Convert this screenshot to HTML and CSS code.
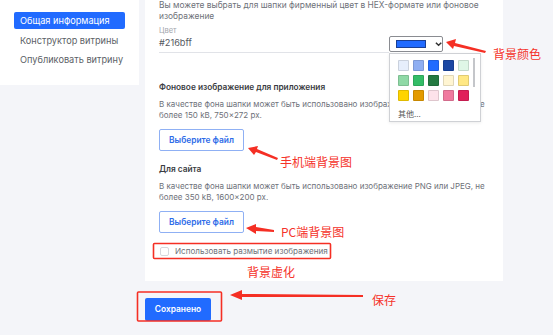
FILE: index.html
```html
<!DOCTYPE html>
<html>
<head>
  <meta charset="utf-8">
  <title>Настройки витрины</title>
  <link rel="stylesheet" href="styles.css">
</head>
<body>
  <div class="page">
    <aside class="side">
      <div class="side-item active">Общая информация</div>
      <div class="side-item">Конструктор витрины</div>
      <div class="side-item">Опубликовать витрину</div>
    </aside>

    <div class="main">
      <section class="card">
        <p class="desc intro">Вы можете выбрать для шапки фирменный цвет в HEX-формате или фоновое изображение</p>

        <div class="field">
          <div class="field-input">
            <div class="field-label">Цвет</div>
            <div class="field-value">#216bff</div>
          </div>
          <div class="picker">
            <div class="picker-select">
              <span class="picker-current"></span>
              <svg class="picker-chevron" width="8" height="6" viewBox="0 0 8 6"><path d="M1 1.5 L4 4.5 L7 1.5" fill="none" stroke="#333" stroke-width="1.6"/></svg>
            </div>
            <div class="picker-menu">
              <div class="swatches">
                <span class="swatch" style="background:#e6eefc"></span>
                <span class="swatch" style="background:#8eaef2"></span>
                <span class="swatch" style="background:#216bff"></span>
                <span class="swatch" style="background:#1b47a3"></span>
                <span class="swatch" style="background:#dff7e7"></span>
                <span class="swatch" style="background:#8fd9a6"></span>
                <span class="swatch" style="background:#34bd67"></span>
                <span class="swatch" style="background:#247a42"></span>
                <span class="swatch" style="background:#fff5d2"></span>
                <span class="swatch" style="background:#ffe884"></span>
                <span class="swatch" style="background:#ffd400"></span>
                <span class="swatch" style="background:#e39a00"></span>
                <span class="swatch" style="background:#fde2ea"></span>
                <span class="swatch" style="background:#f07a9f"></span>
                <span class="swatch" style="background:#e0205a"></span>
              </div>
              <div class="picker-more">其他...</div>
              <span class="picker-scroll"></span>
            </div>
          </div>
        </div>

        <h4 class="block-title">Фоновое изображение для приложения</h4>
        <p class="desc">В качестве фона шапки может быть использовано изображение PNG или JPEG, не более 150 kB, 750×272 px.</p>
        <button class="file-btn">Выберите файл</button>

        <h4 class="block-title">Для сайта</h4>
        <p class="desc">В качестве фона шапки может быть использовано изображение PNG или JPEG, не более 350 kB, 1600×200 px.</p>
        <button class="file-btn">Выберите файл</button>

        <label class="check">
          <span class="check-box"></span>
          Использовать размытие изображения
        </label>
      </section>

      <div class="actions">
        <button class="save-btn">Сохранено</button>
      </div>
    </div>

    <!-- annotations drawn over the screenshot -->
    <svg class="notes" width="553" height="335" viewBox="0 0 553 335">
      <g fill="#f52f24">
        <polygon points="446,42 456,39 455,43 486,51 485,53 454,46 453,49"/>
        <polygon points="248,148 258,146 257,149 278,158 277,160 256,152 254,155"/>
        <polygon points="246,228 256,224 256,227 274,230 274,232 256,231 256,234"/>
        <polygon points="230,295 242,290 242,294 363,295 363,297 242,297 242,300"/>
      </g>
      <g fill="none" stroke="#f52f24" stroke-width="1.6">
        <rect x="153.5" y="243.5" width="177" height="15" rx="1"/>
        <rect x="137.5" y="292" width="84" height="29" rx="1"/>
      </g>
    </svg>
    <div class="note note-color">背景颜色</div>
    <div class="note note-app">手机端背景图</div>
    <div class="note note-site">PC端背景图</div>
    <div class="note note-blur">背景虚化</div>
    <div class="note note-save">保存</div>
  </div>
</body>
</html>
```

FILE: styles.css
```css
* {
  box-sizing: border-box;
}

body {
  margin: 0;
  background: #f4f5f9;
  font-family: Inter, "Noto Sans", sans-serif;
  color: #333;
}

.page {
  position: relative;
  width: 553px;
  height: 335px;
  overflow: hidden;
  display: flex;
  align-items: flex-start;
  gap: 6px;
}

/* left menu */
.side {
  width: 139px;
  height: 85px;
  background: #fff;
  padding: 12px 14px 0;
}

.side-item {
  height: 17px;
  line-height: 17px;
  padding-left: 6px;
  margin-bottom: 2.5px;
  font-size: 9.2px;
  color: #5c5f66;
  border-radius: 2px;
  white-space: nowrap;
}

.side-item.active {
  background: #216bff;
  color: #fff;
}

/* main card */
.main {
  width: 358px;
}

.card {
  background: #fff;
  padding: 0 2px 23px 14px;
}

.desc {
  margin: 0;
  font-size: 8px;
  line-height: 11px;
  color: #6e7179;
}

.desc.intro {
  font-size: 8.4px;
  max-width: 340px;
}

.field {
  display: flex;
  align-items: flex-end;
  margin-top: 4px;
}

.field-input {
  width: 230px;
  border-bottom: 1px solid #e1e3e8;
  padding-bottom: 4px;
}

.field-label {
  font-size: 7.5px;
  line-height: 10px;
  color: #a3a6ad;
  margin-bottom: 1px;
}

.field-value {
  font-size: 9.2px;
  line-height: 11px;
  color: #555861;
}

.picker {
  position: relative;
  margin-bottom: 1px;
}

.picker-select {
  width: 54px;
  height: 16px;
  border: 1px solid #8a8c91;
  border-radius: 2px;
  display: flex;
  align-items: center;
  padding-left: 6px;
  gap: 9px;
}

.picker-current {
  width: 33px;
  height: 8px;
  background: #216bff;
  border: 1px solid #1a3f94;
}

.picker-menu {
  position: absolute;
  left: 0;
  top: 17px;
  width: 92px;
  height: 69px;
  background: #fff;
  border: 1px solid #cfd1d5;
  padding: 6px 0 0 8px;
  box-shadow: 0 1px 3px rgba(0, 0, 0, 0.08);
}

.swatches {
  display: grid;
  grid-template-columns: repeat(5, 11px);
  gap: 4px;
}

.swatch {
  width: 11px;
  height: 11px;
  border: 1px solid rgba(0, 0, 0, 0.12);
  border-radius: 1px;
}

.picker-more {
  margin-top: 7px;
  font-size: 8px;
  color: #555;
  font-family: "Noto Sans CJK SC", sans-serif;
}

.picker-scroll {
  position: absolute;
  left: 83px;
  top: 4px;
  width: 2px;
  height: 29px;
  background: #c4c6ca;
}

.block-title {
  margin: 28px 0 0;
  font-size: 8.3px;
  line-height: 12px;
  font-weight: 600;
  color: #3a3c42;
}

.block-title + .desc {
  margin-top: 6px;
}

.file-btn {
  display: block;
  margin-top: 8px;
  width: 85px;
  height: 22px;
  background: #fff;
  border: 1px solid #8fb0f4;
  border-radius: 2px;
  font-family: inherit;
  font-size: 8.4px;
  font-weight: 600;
  color: #2d6be8;
  white-space: nowrap;
}

.file-btn + .block-title {
  margin-top: 12px;
}

.check {
  display: flex;
  align-items: center;
  gap: 6px;
  height: 14px;
  margin-top: 11px;
  padding-left: 1px;
  font-size: 8.1px;
  color: #6e7179;
  white-space: nowrap;
}

.check-box {
  width: 9px;
  height: 9px;
  border: 1px solid #d6d8dd;
  border-radius: 2px;
}

.actions {
  padding-top: 15px;
}

.save-btn {
  width: 66px;
  height: 23px;
  background: #216bff;
  border: 0;
  border-radius: 2px;
  color: #fff;
  font-family: inherit;
  font-size: 8.4px;
  font-weight: 600;
}

/* red annotations */
.notes {
  position: absolute;
  left: 0;
  top: 0;
  pointer-events: none;
}

.note {
  position: absolute;
  font-family: "Noto Sans CJK SC", sans-serif;
  font-size: 12px;
  line-height: 14px;
  color: #f5322a;
  white-space: nowrap;
}

.note-color { left: 493px; top: 47px; }
.note-app { left: 280px; top: 155px; }
.note-site { left: 281px; top: 225px; }
.note-blur { left: 247px; top: 265px; }
.note-save { left: 372px; top: 293px; }
```
